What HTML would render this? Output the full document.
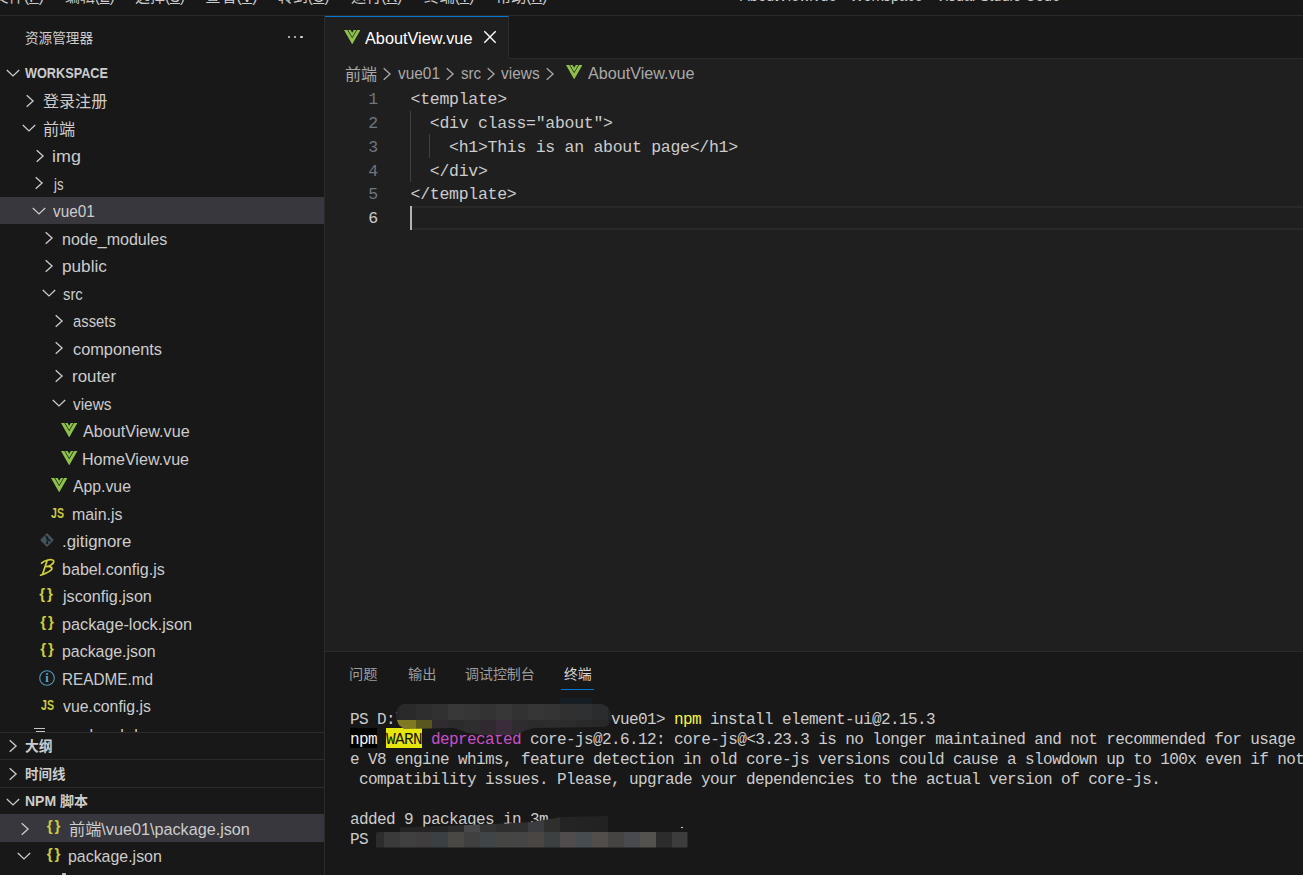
<!DOCTYPE html>
<html lang="zh-CN">
<head>
<meta charset="utf-8">
<title>AboutView.vue - Workspace - Visual Studio Code</title>
<style>
*{box-sizing:border-box;margin:0;padding:0}
html,body{width:1303px;height:875px;overflow:hidden;background:#1f1f1f}
body{position:relative;font-family:"Liberation Sans","Noto Sans CJK SC",sans-serif;font-size:16.25px;color:#cccccc;-webkit-font-smoothing:antialiased}
.abs{position:absolute;white-space:nowrap}
/* title bar */
#titlebar{left:0;top:0;width:1303px;height:16px;background:#181818;border-bottom:1px solid #2b2b2b;overflow:hidden}
/* sidebar */
#sidebar{left:0;top:16px;width:325px;height:859px;background:#181818;border-right:1px solid #2b2b2b;overflow:hidden}
/* editor */
#tabs{left:325px;top:16px;width:978px;height:43px;background:#181818;border-bottom:1px solid #2b2b2b}
#tab{left:325px;top:16px;width:184px;height:43px;background:#1f1f1f;border-top:1px solid #0078d4;border-right:1px solid #2b2b2b}
.ln{position:absolute;left:325px;width:53px;text-align:right;height:23.75px;line-height:23.75px;font-family:"Liberation Mono",monospace;font-size:16.5px;letter-spacing:-0.275px;color:#6e7681}
.cl{position:absolute;left:410.5px;height:23.75px;line-height:23.75px;font-family:"Liberation Mono",monospace;font-size:16.5px;letter-spacing:-0.275px;color:#cccccc;white-space:pre}
.guide{position:absolute;width:1px;background:#404040}
/* panel */
#panel{left:325px;top:651px;width:978px;height:224px;background:#181818;border-top:1px solid #2b2b2b}
.tl{position:absolute;left:350px;height:20px;line-height:20px;font-family:"Liberation Mono",monospace;font-size:16px;letter-spacing:-0.6px;color:#cccccc;white-space:pre}
.mz{position:absolute}
</style>
</head>
<body>

<!-- ===== TITLE BAR (cropped) ===== -->
<div id="titlebar" class="abs"></div>
<div class="abs" style="left:0;top:0;width:1303px;height:15px;overflow:hidden">
<span class="abs" style="left:-7.50px;top:-17.05px;height:27.5px;line-height:27.5px;font-size:16.25px;font-weight:normal;color:#cccccc;font-family:'Liberation Sans','Noto Sans CJK SC',sans-serif;transform:scaleX(0.9558);transform-origin:0 50%;">文件(<u>F</u>)</span>
<span class="abs" style="left:64.50px;top:-17.05px;height:27.5px;line-height:27.5px;font-size:16.25px;font-weight:normal;color:#cccccc;font-family:'Liberation Sans','Noto Sans CJK SC',sans-serif;transform:scaleX(0.9154);transform-origin:0 50%;">编辑(<u>E</u>)</span>
<span class="abs" style="left:135.00px;top:-17.05px;height:27.5px;line-height:27.5px;font-size:16.25px;font-weight:normal;color:#cccccc;font-family:'Liberation Sans','Noto Sans CJK SC',sans-serif;transform:scaleX(0.9209);transform-origin:0 50%;">选择(<u>S</u>)</span>
<span class="abs" style="left:205.00px;top:-17.05px;height:27.5px;line-height:27.5px;font-size:16.25px;font-weight:normal;color:#cccccc;font-family:'Liberation Sans','Noto Sans CJK SC',sans-serif;transform:scaleX(0.9674);transform-origin:0 50%;">查看(<u>V</u>)</span>
<span class="abs" style="left:277.50px;top:-17.05px;height:27.5px;line-height:27.5px;font-size:16.25px;font-weight:normal;color:#cccccc;font-family:'Liberation Sans','Noto Sans CJK SC',sans-serif;transform:scaleX(0.9181);transform-origin:0 50%;">转到(<u>G</u>)</span>
<span class="abs" style="left:351.00px;top:-17.05px;height:27.5px;line-height:27.5px;font-size:16.25px;font-weight:normal;color:#cccccc;font-family:'Liberation Sans','Noto Sans CJK SC',sans-serif;transform:scaleX(0.9333);transform-origin:0 50%;">运行(<u>R</u>)</span>
<span class="abs" style="left:423.50px;top:-17.05px;height:27.5px;line-height:27.5px;font-size:16.25px;font-weight:normal;color:#cccccc;font-family:'Liberation Sans','Noto Sans CJK SC',sans-serif;transform:scaleX(0.9463);transform-origin:0 50%;">终端(<u>T</u>)</span>
<span class="abs" style="left:496.00px;top:-17.05px;height:27.5px;line-height:27.5px;font-size:16.25px;font-weight:normal;color:#cccccc;font-family:'Liberation Sans','Noto Sans CJK SC',sans-serif;transform:scaleX(0.9333);transform-origin:0 50%;">帮助(<u>H</u>)</span>
<span class="abs" style="left:739.50px;top:-17.95px;height:27.5px;line-height:27.5px;font-size:16.25px;font-weight:normal;color:#cccccc;font-family:'Liberation Sans','Noto Sans CJK SC',sans-serif;transform:scaleX(0.9015);transform-origin:0 50%;">AboutView.vue - Workspace - Visual Studio Code</span>
</div>

<!-- ===== SIDEBAR ===== -->
<div id="sidebar" class="abs"></div>
<span class="abs" style="left:25.30px;top:24.75px;height:27.5px;line-height:27.5px;font-size:13.75px;font-weight:normal;color:#cccccc;font-family:'Liberation Sans','Noto Sans CJK SC',sans-serif;transform:scaleX(0.9899);transform-origin:0 50%;">资源管理器</span>
<div class="abs" style="left:287.6px;top:35.9px;width:2.5px;height:2.4px;border-radius:1.2px;background:#d8d8d8"></div>
<div class="abs" style="left:293.8px;top:35.9px;width:2.5px;height:2.4px;border-radius:1.2px;background:#d8d8d8"></div>
<div class="abs" style="left:300.0px;top:35.9px;width:2.5px;height:2.4px;border-radius:1.2px;background:#d8d8d8"></div>
<svg class="abs" style="left:4.50px;top:66.90px" width="16" height="12" viewBox="0 0 16 12"><path d="M1.8 3 L8 8.9 L14.2 3" fill="none" stroke="#cccccc" stroke-width="1.3"/></svg>
<span class="abs" style="left:25.20px;top:59.85px;height:27.5px;line-height:27.5px;font-size:13.75px;font-weight:bold;color:#cccccc;font-family:'Liberation Sans','Noto Sans CJK SC',sans-serif;transform:scaleX(0.9229);transform-origin:0 50%;">WORKSPACE</span>
<svg class="abs" style="left:23.50px;top:93.00px" width="12" height="16" viewBox="0 0 12 16"><path d="M2.7 2.2 L9.1 8 L2.7 13.8" fill="none" stroke="#cccccc" stroke-width="1.3"/></svg>
<span class="abs" style="left:43.00px;top:88.35px;height:27.5px;line-height:27.5px;font-size:16.25px;font-weight:normal;color:#cccccc;font-family:'Liberation Sans','Noto Sans CJK SC',sans-serif;transform:scaleX(0.9884);transform-origin:0 50%;">登录注册</span>
<svg class="abs" style="left:21.00px;top:122.40px" width="16" height="12" viewBox="0 0 16 12"><path d="M1.8 3 L8 8.9 L14.2 3" fill="none" stroke="#cccccc" stroke-width="1.3"/></svg>
<span class="abs" style="left:43.00px;top:115.85px;height:27.5px;line-height:27.5px;font-size:16.25px;font-weight:normal;color:#cccccc;font-family:'Liberation Sans','Noto Sans CJK SC',sans-serif;transform:scaleX(0.9923);transform-origin:0 50%;">前端</span>
<svg class="abs" style="left:33.50px;top:148.00px" width="12" height="16" viewBox="0 0 12 16"><path d="M2.7 2.2 L9.1 8 L2.7 13.8" fill="none" stroke="#cccccc" stroke-width="1.3"/></svg>
<span class="abs" style="left:51.90px;top:143.35px;height:27.5px;line-height:27.5px;font-size:16.25px;font-weight:normal;color:#cccccc;font-family:'Liberation Sans','Noto Sans CJK SC',sans-serif;transform:scaleX(1.1016);transform-origin:0 50%;">img</span>
<svg class="abs" style="left:33.30px;top:175.00px" width="12" height="16" viewBox="0 0 12 16"><path d="M2.7 2.2 L9.1 8 L2.7 13.8" fill="none" stroke="#cccccc" stroke-width="1.3"/></svg>
<span class="abs" style="left:53.61px;top:170.85px;height:27.5px;line-height:27.5px;font-size:16.25px;font-weight:normal;color:#cccccc;font-family:'Liberation Sans','Noto Sans CJK SC',sans-serif;transform:scaleX(0.8089);transform-origin:0 50%;">js</span>
<div class="abs" style="left:0;top:196.75px;width:324px;height:27.5px;background:#37373d"></div>
<svg class="abs" style="left:30.80px;top:205.40px" width="16" height="12" viewBox="0 0 16 12"><path d="M1.8 3 L8 8.9 L14.2 3" fill="none" stroke="#cccccc" stroke-width="1.3"/></svg>
<span class="abs" style="left:52.80px;top:198.35px;height:27.5px;line-height:27.5px;font-size:16.25px;font-weight:normal;color:#cccccc;font-family:'Liberation Sans','Noto Sans CJK SC',sans-serif;transform:scaleX(0.9426);transform-origin:0 50%;">vue01</span>
<svg class="abs" style="left:43.30px;top:230.00px" width="12" height="16" viewBox="0 0 12 16"><path d="M2.7 2.2 L9.1 8 L2.7 13.8" fill="none" stroke="#cccccc" stroke-width="1.3"/></svg>
<span class="abs" style="left:61.81px;top:225.85px;height:27.5px;line-height:27.5px;font-size:16.25px;font-weight:normal;color:#cccccc;font-family:'Liberation Sans','Noto Sans CJK SC',sans-serif;transform:scaleX(0.9878);transform-origin:0 50%;">node_modules</span>
<svg class="abs" style="left:43.30px;top:258.00px" width="12" height="16" viewBox="0 0 12 16"><path d="M2.7 2.2 L9.1 8 L2.7 13.8" fill="none" stroke="#cccccc" stroke-width="1.3"/></svg>
<span class="abs" style="left:61.74px;top:253.35px;height:27.5px;line-height:27.5px;font-size:16.25px;font-weight:normal;color:#cccccc;font-family:'Liberation Sans','Noto Sans CJK SC',sans-serif;transform:scaleX(1.0573);transform-origin:0 50%;">public</span>
<svg class="abs" style="left:40.80px;top:287.40px" width="16" height="12" viewBox="0 0 16 12"><path d="M1.8 3 L8 8.9 L14.2 3" fill="none" stroke="#cccccc" stroke-width="1.3"/></svg>
<span class="abs" style="left:62.80px;top:280.85px;height:27.5px;line-height:27.5px;font-size:16.25px;font-weight:normal;color:#cccccc;font-family:'Liberation Sans','Noto Sans CJK SC',sans-serif;transform:scaleX(0.9101);transform-origin:0 50%;">src</span>
<svg class="abs" style="left:53.10px;top:313.00px" width="12" height="16" viewBox="0 0 12 16"><path d="M2.7 2.2 L9.1 8 L2.7 13.8" fill="none" stroke="#cccccc" stroke-width="1.3"/></svg>
<span class="abs" style="left:72.60px;top:308.35px;height:27.5px;line-height:27.5px;font-size:16.25px;font-weight:normal;color:#cccccc;font-family:'Liberation Sans','Noto Sans CJK SC',sans-serif;transform:scaleX(0.9116);transform-origin:0 50%;">assets</span>
<svg class="abs" style="left:53.10px;top:340.00px" width="12" height="16" viewBox="0 0 12 16"><path d="M2.7 2.2 L9.1 8 L2.7 13.8" fill="none" stroke="#cccccc" stroke-width="1.3"/></svg>
<span class="abs" style="left:72.60px;top:335.85px;height:27.5px;line-height:27.5px;font-size:16.25px;font-weight:normal;color:#cccccc;font-family:'Liberation Sans','Noto Sans CJK SC',sans-serif;transform:scaleX(1.0056);transform-origin:0 50%;">components</span>
<svg class="abs" style="left:53.10px;top:368.00px" width="12" height="16" viewBox="0 0 12 16"><path d="M2.7 2.2 L9.1 8 L2.7 13.8" fill="none" stroke="#cccccc" stroke-width="1.3"/></svg>
<span class="abs" style="left:71.56px;top:363.35px;height:27.5px;line-height:27.5px;font-size:16.25px;font-weight:normal;color:#cccccc;font-family:'Liberation Sans','Noto Sans CJK SC',sans-serif;transform:scaleX(1.0395);transform-origin:0 50%;">router</span>
<svg class="abs" style="left:50.60px;top:397.40px" width="16" height="12" viewBox="0 0 16 12"><path d="M1.8 3 L8 8.9 L14.2 3" fill="none" stroke="#cccccc" stroke-width="1.3"/></svg>
<span class="abs" style="left:72.60px;top:390.85px;height:27.5px;line-height:27.5px;font-size:16.25px;font-weight:normal;color:#cccccc;font-family:'Liberation Sans','Noto Sans CJK SC',sans-serif;transform:scaleX(0.9480);transform-origin:0 50%;">views</span>
<svg class="abs" style="left:61.20px;top:422.80px" width="16.4" height="14.4" viewBox="0 0 16.4 14.4"><path d="M0 0 H3.3 L8.2 8.3 L13.1 0 H16.4 L8.2 14.4 Z" fill="#8dc149"/><path d="M4.1 0 H6.6 L8.2 2.7 L9.8 0 H12.3 L8.2 7 Z" fill="#8dc149"/></svg>
<span class="abs" style="left:83.00px;top:418.35px;height:27.5px;line-height:27.5px;font-size:16.25px;font-weight:normal;color:#cccccc;font-family:'Liberation Sans','Noto Sans CJK SC',sans-serif;transform:scaleX(0.9946);transform-origin:0 50%;">AboutView.vue</span>
<svg class="abs" style="left:61.20px;top:450.80px" width="16.4" height="14.4" viewBox="0 0 16.4 14.4"><path d="M0 0 H3.3 L8.2 8.3 L13.1 0 H16.4 L8.2 14.4 Z" fill="#8dc149"/><path d="M4.1 0 H6.6 L8.2 2.7 L9.8 0 H12.3 L8.2 7 Z" fill="#8dc149"/></svg>
<span class="abs" style="left:82.01px;top:445.85px;height:27.5px;line-height:27.5px;font-size:16.25px;font-weight:normal;color:#cccccc;font-family:'Liberation Sans','Noto Sans CJK SC',sans-serif;transform:scaleX(0.9901);transform-origin:0 50%;">HomeView.vue</span>
<svg class="abs" style="left:50.90px;top:477.80px" width="16.4" height="14.4" viewBox="0 0 16.4 14.4"><path d="M0 0 H3.3 L8.2 8.3 L13.1 0 H16.4 L8.2 14.4 Z" fill="#8dc149"/><path d="M4.1 0 H6.6 L8.2 2.7 L9.8 0 H12.3 L8.2 7 Z" fill="#8dc149"/></svg>
<span class="abs" style="left:72.70px;top:473.35px;height:27.5px;line-height:27.5px;font-size:16.25px;font-weight:normal;color:#cccccc;font-family:'Liberation Sans','Noto Sans CJK SC',sans-serif;transform:scaleX(0.9716);transform-origin:0 50%;">App.vue</span>
<span class="abs" style="left:50.80px;top:503.10px;height:20px;line-height:20px;font-size:14px;font-weight:bold;color:#cbcb41;transform:scaleX(0.755);transform-origin:0 50%">JS</span>
<span class="abs" style="left:71.72px;top:500.85px;height:27.5px;line-height:27.5px;font-size:16.25px;font-weight:normal;color:#cccccc;font-family:'Liberation Sans','Noto Sans CJK SC',sans-serif;transform:scaleX(0.9792);transform-origin:0 50%;">main.js</span>
<svg class="abs" style="left:38.70px;top:532.00px" width="16" height="16" viewBox="0 0 16 16"><path d="M8 1.1 L14.9 8 L8 14.9 L1.1 8 Z" fill="#41535b"/><path d="M6.3 3.6 L8.2 5.6 V11.4 M8.2 6.2 L10.4 8.4" fill="none" stroke="#181818" stroke-width="1.1"/><circle cx="8.2" cy="5.6" r="1.1" fill="#181818"/><circle cx="8.2" cy="11.2" r="1.1" fill="#181818"/><circle cx="10.6" cy="8.5" r="1.1" fill="#181818"/></svg>
<span class="abs" style="left:61.76px;top:528.35px;height:27.5px;line-height:27.5px;font-size:16.25px;font-weight:normal;color:#cccccc;font-family:'Liberation Sans','Noto Sans CJK SC',sans-serif;transform:scaleX(1.0363);transform-origin:0 50%;">.gitignore</span>
<svg class="abs" style="left:39.20px;top:557.70px" width="17" height="19" viewBox="0 0 17 19"><path d="M2.6 5.2 C5.5 2.4 10.5 1.2 13.6 2.0 C15.6 2.6 14.8 5.2 12.6 6.6 C11 7.7 8.8 8.4 7.6 8.6 C10.2 8.2 13.4 8.8 12.8 11 C12.2 13.2 6.6 15.4 1.6 17.2 M7.9 3.2 L3.6 16.2" fill="none" stroke="#d0cf3c" stroke-width="1.75" stroke-linecap="round" stroke-linejoin="round"/></svg>
<span class="abs" style="left:61.81px;top:555.85px;height:27.5px;line-height:27.5px;font-size:16.25px;font-weight:normal;color:#cccccc;font-family:'Liberation Sans','Noto Sans CJK SC',sans-serif;transform:scaleX(0.9897);transform-origin:0 50%;">babel.config.js</span>
<span class="abs" style="left:39.30px;top:584.40px;height:20px;line-height:20px;font-size:15.2px;font-weight:bold;color:#cbcb41;letter-spacing:1.9px">{}</span>
<span class="abs" style="left:62.89px;top:583.35px;height:27.5px;line-height:27.5px;font-size:16.25px;font-weight:normal;color:#cccccc;font-family:'Liberation Sans','Noto Sans CJK SC',sans-serif;transform:scaleX(0.9935);transform-origin:0 50%;">jsconfig.json</span>
<span class="abs" style="left:40.20px;top:612.40px;height:20px;line-height:20px;font-size:15.2px;font-weight:bold;color:#cbcb41;letter-spacing:1.9px">{}</span>
<span class="abs" style="left:61.80px;top:610.85px;height:27.5px;line-height:27.5px;font-size:16.25px;font-weight:normal;color:#cccccc;font-family:'Liberation Sans','Noto Sans CJK SC',sans-serif;transform:scaleX(0.9997);transform-origin:0 50%;">package-lock.json</span>
<span class="abs" style="left:40.20px;top:639.40px;height:20px;line-height:20px;font-size:15.2px;font-weight:bold;color:#cbcb41;letter-spacing:1.9px">{}</span>
<span class="abs" style="left:61.82px;top:638.35px;height:27.5px;line-height:27.5px;font-size:16.25px;font-weight:normal;color:#cccccc;font-family:'Liberation Sans','Noto Sans CJK SC',sans-serif;transform:scaleX(0.9784);transform-origin:0 50%;">package.json</span>
<svg class="abs" style="left:37.90px;top:669.00px" width="18" height="18" viewBox="0 0 18 18"><circle cx="9" cy="9" r="7.3" fill="none" stroke="#519aba" stroke-width="1.1"/><text x="9" y="13" text-anchor="middle" font-family="Liberation Serif,serif" font-weight="bold" font-size="12.5" fill="#5fa8c8">i</text></svg>
<span class="abs" style="left:61.86px;top:665.85px;height:27.5px;line-height:27.5px;font-size:16.25px;font-weight:normal;color:#cccccc;font-family:'Liberation Sans','Noto Sans CJK SC',sans-serif;transform:scaleX(0.9411);transform-origin:0 50%;">README.md</span>
<span class="abs" style="left:40.90px;top:695.10px;height:20px;line-height:20px;font-size:14px;font-weight:bold;color:#cbcb41;transform:scaleX(0.755);transform-origin:0 50%">JS</span>
<span class="abs" style="left:62.80px;top:693.35px;height:27.5px;line-height:27.5px;font-size:16.25px;font-weight:normal;color:#cccccc;font-family:'Liberation Sans','Noto Sans CJK SC',sans-serif;transform:scaleX(0.9734);transform-origin:0 50%;">vue.config.js</span>
<div class="abs" style="left:0;top:720px;width:324px;height:12px;overflow:hidden"><div class="abs" style="left:34px;top:7.8px;width:10.6px;height:1.6px;background:#c5c5c5"></div><div class="abs" style="left:36px;top:10.9px;width:8.6px;height:1.6px;background:#c5c5c5"></div><span class="abs" style="left:89.6px;top:1.8px;height:27.5px;line-height:27.5px;font-size:16.25px;color:#cccccc">l</span><span class="abs" style="left:120.3px;top:1.8px;height:27.5px;line-height:27.5px;font-size:16.25px;color:#cccccc">l</span><span class="abs" style="left:134.2px;top:1.8px;height:27.5px;line-height:27.5px;font-size:16.25px;color:#cccccc">l</span></div>
<div class="abs" style="left:0;top:732px;width:324px;height:27px;background:#181818;border-top:1px solid #2b2b2b"></div><svg class="abs" style="left:7.10px;top:737.90px" width="12" height="16" viewBox="0 0 12 16"><path d="M2.7 2.2 L9.1 8 L2.7 13.8" fill="none" stroke="#cccccc" stroke-width="1.3"/></svg><span class="abs" style="left:25.20px;top:732.85px;height:27.5px;line-height:27.5px;font-size:13.75px;font-weight:bold;color:#cccccc;font-family:'Liberation Sans','Noto Sans CJK SC',sans-serif;transform:scaleX(1.0019);transform-origin:0 50%;">大纲</span>
<div class="abs" style="left:0;top:759px;width:324px;height:28px;background:#181818;border-top:1px solid #2b2b2b"></div><svg class="abs" style="left:7.10px;top:765.90px" width="12" height="16" viewBox="0 0 12 16"><path d="M2.7 2.2 L9.1 8 L2.7 13.8" fill="none" stroke="#cccccc" stroke-width="1.3"/></svg><span class="abs" style="left:25.20px;top:760.85px;height:27.5px;line-height:27.5px;font-size:13.75px;font-weight:bold;color:#cccccc;font-family:'Liberation Sans','Noto Sans CJK SC',sans-serif;transform:scaleX(0.9783);transform-origin:0 50%;">时间线</span>
<div class="abs" style="left:0;top:787px;width:324px;height:28px;background:#181818;border-top:1px solid #2b2b2b"></div><svg class="abs" style="left:4.60px;top:795.50px" width="16" height="12" viewBox="0 0 16 12"><path d="M1.8 3 L8 8.9 L14.2 3" fill="none" stroke="#cccccc" stroke-width="1.3"/></svg><span class="abs" style="left:25.20px;top:787.95px;height:27.5px;line-height:27.5px;font-size:13.75px;font-weight:bold;color:#cccccc;font-family:'Liberation Sans','Noto Sans CJK SC',sans-serif;transform:scaleX(1.0189);transform-origin:0 50%;">NPM 脚本</span>
<div class="abs" style="left:0;top:814px;width:324px;height:28px;background:#37373d"></div>
<svg class="abs" style="left:18.80px;top:820.55px" width="12" height="16" viewBox="0 0 12 16"><path d="M2.7 2.2 L9.1 8 L2.7 13.8" fill="none" stroke="#cccccc" stroke-width="1.3"/></svg>
<span class="abs" style="left:46.80px;top:816.35px;height:20px;line-height:20px;font-size:15.2px;font-weight:bold;color:#cbcb41;letter-spacing:1.9px">{}</span>
<span class="abs" style="left:69.20px;top:815.50px;height:27.5px;line-height:27.5px;font-size:16.25px;font-weight:normal;color:#cccccc;font-family:'Liberation Sans','Noto Sans CJK SC',sans-serif;transform:scaleX(0.9960);transform-origin:0 50%;">前端\vue01\package.json</span>
<svg class="abs" style="left:16.20px;top:850.05px" width="16" height="12" viewBox="0 0 16 12"><path d="M1.8 3 L8 8.9 L14.2 3" fill="none" stroke="#cccccc" stroke-width="1.3"/></svg>
<span class="abs" style="left:46.80px;top:843.85px;height:20px;line-height:20px;font-size:15.2px;font-weight:bold;color:#cbcb41;letter-spacing:1.9px">{}</span>
<span class="abs" style="left:68.22px;top:843.00px;height:27.5px;line-height:27.5px;font-size:16.25px;font-weight:normal;color:#cccccc;font-family:'Liberation Sans','Noto Sans CJK SC',sans-serif;transform:scaleX(0.9795);transform-origin:0 50%;">package.json</span>
<div class="abs" style="left:62px;top:873.3px;width:4px;height:2px;border-radius:1px 1px 0 0;background:#bdbdbd"></div>

<!-- ===== EDITOR ===== -->
<div id="tabs" class="abs"></div>
<div id="tab" class="abs"></div>
<svg class="abs" style="left:344.00px;top:30.10px" width="16.4" height="14.4" viewBox="0 0 16.4 14.4"><path d="M0 0 H3.3 L8.2 8.3 L13.1 0 H16.4 L8.2 14.4 Z" fill="#8dc149"/><path d="M4.1 0 H6.6 L8.2 2.7 L9.8 0 H12.3 L8.2 7 Z" fill="#8dc149"/></svg>
<span class="abs" style="left:365.20px;top:24.55px;height:27.5px;line-height:27.5px;font-size:16.25px;font-weight:normal;color:#ffffff;font-family:'Liberation Sans','Noto Sans CJK SC',sans-serif;transform:scaleX(1.0021);transform-origin:0 50%;">AboutView.vue</span>
<svg class="abs" style="left:482px;top:29.3px" width="16" height="16" viewBox="0 0 16 16"><path d="M2.3 2.3 L13.7 13.7 M13.7 2.3 L2.3 13.7" stroke="#ffffff" stroke-width="1.4" fill="none"/></svg>
<span class="abs" style="left:345.20px;top:60.65px;height:27.5px;line-height:27.5px;font-size:16.25px;font-weight:normal;color:#a9a9a9;font-family:'Liberation Sans','Noto Sans CJK SC',sans-serif;transform:scaleX(0.9860);transform-origin:0 50%;">前端</span>
<svg class="abs" style="left:381.30px;top:65.80px" width="12" height="16" viewBox="0 0 12 16"><path d="M2.7 2.2 L9.1 8 L2.7 13.8" fill="none" stroke="#a9a9a9" stroke-width="1.3"/></svg>
<span class="abs" style="left:398.00px;top:60.25px;height:27.5px;line-height:27.5px;font-size:16.25px;font-weight:normal;color:#a9a9a9;font-family:'Liberation Sans','Noto Sans CJK SC',sans-serif;transform:scaleX(0.9494);transform-origin:0 50%;">vue01</span>
<svg class="abs" style="left:444.30px;top:65.80px" width="12" height="16" viewBox="0 0 12 16"><path d="M2.7 2.2 L9.1 8 L2.7 13.8" fill="none" stroke="#a9a9a9" stroke-width="1.3"/></svg>
<span class="abs" style="left:461.00px;top:60.25px;height:27.5px;line-height:27.5px;font-size:16.25px;font-weight:normal;color:#a9a9a9;font-family:'Liberation Sans','Noto Sans CJK SC',sans-serif;transform:scaleX(0.9287);transform-origin:0 50%;">src</span>
<svg class="abs" style="left:484.50px;top:65.80px" width="12" height="16" viewBox="0 0 12 16"><path d="M2.7 2.2 L9.1 8 L2.7 13.8" fill="none" stroke="#a9a9a9" stroke-width="1.3"/></svg>
<span class="abs" style="left:501.00px;top:60.25px;height:27.5px;line-height:27.5px;font-size:16.25px;font-weight:normal;color:#a9a9a9;font-family:'Liberation Sans','Noto Sans CJK SC',sans-serif;transform:scaleX(0.9504);transform-origin:0 50%;">views</span>
<svg class="abs" style="left:543.50px;top:65.80px" width="12" height="16" viewBox="0 0 12 16"><path d="M2.7 2.2 L9.1 8 L2.7 13.8" fill="none" stroke="#a9a9a9" stroke-width="1.3"/></svg>
<svg class="abs" style="left:566.00px;top:64.60px" width="16.4" height="14.4" viewBox="0 0 16.4 14.4"><path d="M0 0 H3.3 L8.2 8.3 L13.1 0 H16.4 L8.2 14.4 Z" fill="#8dc149"/><path d="M4.1 0 H6.6 L8.2 2.7 L9.8 0 H12.3 L8.2 7 Z" fill="#8dc149"/></svg>
<span class="abs" style="left:587.50px;top:60.25px;height:27.5px;line-height:27.5px;font-size:16.25px;font-weight:normal;color:#a9a9a9;font-family:'Liberation Sans','Noto Sans CJK SC',sans-serif;transform:scaleX(0.9937);transform-origin:0 50%;">AboutView.vue</span>
<div class="ln" style="top:88.45px;color:#6e7681">1</div>
<div class="cl" style="top:88.45px">&lt;template&gt;</div>
<div class="ln" style="top:112.20px;color:#6e7681">2</div>
<div class="cl" style="top:112.20px">  &lt;div class="about"&gt;</div>
<div class="ln" style="top:135.95px;color:#6e7681">3</div>
<div class="cl" style="top:135.95px">    &lt;h1&gt;This is an about page&lt;/h1&gt;</div>
<div class="ln" style="top:159.70px;color:#6e7681">4</div>
<div class="cl" style="top:159.70px">  &lt;/div&gt;</div>
<div class="ln" style="top:183.45px;color:#6e7681">5</div>
<div class="cl" style="top:183.45px">&lt;/template&gt;</div>
<div class="ln" style="top:207.20px;color:#cccccc">6</div>
<div class="guide" style="left:410px;top:110.50px;height:71.25px"></div>
<div class="guide" style="left:429px;top:134.25px;height:23.75px"></div>
<div class="abs" style="left:411px;top:206px;width:892px;height:24px;border-top:2px solid #292929;border-bottom:2px solid #292929"></div>
<div class="abs" style="left:409.7px;top:206px;width:2.5px;height:24px;background:#b4b4b2"></div>

<!-- ===== PANEL ===== -->
<div id="panel" class="abs"></div>
<span class="abs" style="left:349.26px;top:660.85px;height:27.5px;line-height:27.5px;font-size:13.75px;font-weight:normal;color:#9d9d9d;font-family:'Liberation Sans','Noto Sans CJK SC',sans-serif;transform:scaleX(1.0355);transform-origin:0 50%;">问题</span>
<span class="abs" style="left:407.50px;top:660.85px;height:27.5px;line-height:27.5px;font-size:13.75px;font-weight:normal;color:#9d9d9d;font-family:'Liberation Sans','Noto Sans CJK SC',sans-serif;transform:scaleX(1.0355);transform-origin:0 50%;">输出</span>
<span class="abs" style="left:465.00px;top:660.85px;height:27.5px;line-height:27.5px;font-size:13.75px;font-weight:normal;color:#9d9d9d;font-family:'Liberation Sans','Noto Sans CJK SC',sans-serif;transform:scaleX(1.0147);transform-origin:0 50%;">调试控制台</span>
<span class="abs" style="left:564.00px;top:660.85px;height:27.5px;line-height:27.5px;font-size:13.75px;font-weight:normal;color:#d6d6d6;font-family:'Liberation Sans','Noto Sans CJK SC',sans-serif;transform:scaleX(1.0090);transform-origin:0 50%;">终端</span>
<div class="abs" style="left:561px;top:688.5px;width:33px;height:1px;background:#0078d4"></div>
<div class="abs" style="left:350px;top:728px;width:27px;height:20px;background:#000000"></div>
<div class="abs" style="left:386px;top:728px;width:36px;height:20px;background:#e5e510"></div>
<div class="tl" style="top:710.20px">PS D:\                       vue01&gt; <span style="color:#f5f543">npm</span> install element-ui@2.15.3</div>
<div class="tl" style="top:730.20px"><span style="color:#f2f2f2">npm</span> <span style="color:#15150a">WARN</span> <span style="color:#c94fc9">deprecated</span> core-js@2.6.12: core-js@&lt;3.23.3 is no longer maintained and not recommended for usage du</div>
<div class="tl" style="top:750.20px">e V8 engine whims, feature detection in old core-js versions could cause a slowdown up to 100x even if noth</div>
<div class="tl" style="top:770.20px"> compatibility issues. Please, upgrade your dependencies to the actual version of core-js.</div>
<div class="tl" style="top:810.20px">added 9 packages in 3m</div>
<div class="tl" style="top:830.20px">PS D:\</div>
<div class="abs" style="left:560px;top:698px;width:32px;height:6px;background:#161d25"></div>
<div class="abs" style="left:384px;top:704px;width:240px;height:32px;clip-path:polygon(12.3px 8px,14px 3px,19px 0px,218px 0px,224px 3px,227px 9px,227px 16px,225px 21px,220px 23px,150px 24px,140px 27px,132px 31px,100px 31px,84px 29px,70px 24px,20px 25px,15px 21px,12.3px 15px);overflow:hidden"><div class="mz" style="left:0px;top:0px;width:16px;height:16px;background:#262626"></div><div class="mz" style="left:16px;top:0px;width:16px;height:16px;background:#2a2a2a"></div><div class="mz" style="left:32px;top:0px;width:16px;height:16px;background:#2e2e2e"></div><div class="mz" style="left:48px;top:0px;width:16px;height:16px;background:#313131"></div><div class="mz" style="left:64px;top:0px;width:16px;height:16px;background:#383838"></div><div class="mz" style="left:80px;top:0px;width:16px;height:16px;background:#363636"></div><div class="mz" style="left:96px;top:0px;width:16px;height:16px;background:#333333"></div><div class="mz" style="left:112px;top:0px;width:16px;height:16px;background:#373737"></div><div class="mz" style="left:128px;top:0px;width:16px;height:16px;background:#323232"></div><div class="mz" style="left:144px;top:0px;width:16px;height:16px;background:#363636"></div><div class="mz" style="left:160px;top:0px;width:16px;height:16px;background:#343434"></div><div class="mz" style="left:176px;top:0px;width:16px;height:16px;background:#303030"></div><div class="mz" style="left:192px;top:0px;width:16px;height:16px;background:#2e3032"></div><div class="mz" style="left:208px;top:0px;width:16px;height:16px;background:#2a2c2e"></div><div class="mz" style="left:224px;top:0px;width:16px;height:16px;background:#242424"></div><div class="mz" style="left:0px;top:16px;width:16px;height:16px;background:#7f7a22"></div><div class="mz" style="left:16px;top:16px;width:16px;height:16px;background:#7f7a22"></div><div class="mz" style="left:32px;top:16px;width:16px;height:16px;background:#5a5620"></div><div class="mz" style="left:48px;top:16px;width:16px;height:16px;background:#302b31"></div><div class="mz" style="left:64px;top:16px;width:16px;height:16px;background:#2c2b2c"></div><div class="mz" style="left:80px;top:16px;width:16px;height:16px;background:#2e2e2e"></div><div class="mz" style="left:96px;top:16px;width:16px;height:16px;background:#30292f"></div><div class="mz" style="left:112px;top:16px;width:16px;height:16px;background:#3a2d39"></div><div class="mz" style="left:128px;top:16px;width:16px;height:16px;background:#2e2c2e"></div><div class="mz" style="left:144px;top:16px;width:16px;height:16px;background:#2b2b2b"></div><div class="mz" style="left:160px;top:16px;width:16px;height:16px;background:#2d2d2d"></div><div class="mz" style="left:176px;top:16px;width:16px;height:16px;background:#2c2c2c"></div><div class="mz" style="left:192px;top:16px;width:16px;height:16px;background:#2a2a2a"></div><div class="mz" style="left:208px;top:16px;width:16px;height:16px;background:#282828"></div><div class="mz" style="left:224px;top:16px;width:16px;height:16px;background:#222222"></div></div>
<div class="abs" style="left:368px;top:816px;width:330px;height:32px;clip-path:polygon(8px 17.1px,19px 11.6px,54.9px 10.8px,88px 9.4px,115.6px 8.3px,137.7px 7.5px,162.6px 6.1px,176.4px 3.9px,193px 1.1px,240px 0px,240.5px 11.6px,319.5px 11.6px,319.5px 31.5px,8px 31.5px);overflow:hidden"><div class="mz" style="left:80px;top:0px;width:16px;height:16px;background:#2b2b2b"></div><div class="mz" style="left:96px;top:0px;width:16px;height:16px;background:#48484a"></div><div class="mz" style="left:112px;top:0px;width:16px;height:16px;background:#333333"></div><div class="mz" style="left:128px;top:0px;width:16px;height:16px;background:#2e2e2e"></div><div class="mz" style="left:144px;top:0px;width:16px;height:16px;background:#2f2f2f"></div><div class="mz" style="left:160px;top:0px;width:16px;height:16px;background:#3a3c40"></div><div class="mz" style="left:176px;top:0px;width:16px;height:16px;background:#2f2f2d"></div><div class="mz" style="left:192px;top:0px;width:16px;height:16px;background:#242424"></div><div class="mz" style="left:208px;top:0px;width:16px;height:16px;background:#232323"></div><div class="mz" style="left:224px;top:0px;width:16px;height:16px;background:#222222"></div><div class="mz" style="left:32px;top:0px;width:16px;height:16px;background:#242424"></div><div class="mz" style="left:48px;top:0px;width:16px;height:16px;background:#242424"></div><div class="mz" style="left:64px;top:0px;width:16px;height:16px;background:#242424"></div><div class="mz" style="left:0px;top:16px;width:16px;height:16px;background:#2c2c2c"></div><div class="mz" style="left:16px;top:16px;width:16px;height:16px;background:#3a3a3a"></div><div class="mz" style="left:32px;top:16px;width:16px;height:16px;background:#404040"></div><div class="mz" style="left:48px;top:16px;width:16px;height:16px;background:#3f3d3d"></div><div class="mz" style="left:64px;top:16px;width:16px;height:16px;background:#3a4145"></div><div class="mz" style="left:80px;top:16px;width:16px;height:16px;background:#4a4845"></div><div class="mz" style="left:96px;top:16px;width:16px;height:16px;background:#404040"></div><div class="mz" style="left:112px;top:16px;width:16px;height:16px;background:#3f4648"></div><div class="mz" style="left:128px;top:16px;width:16px;height:16px;background:#454544"></div><div class="mz" style="left:144px;top:16px;width:16px;height:16px;background:#454545"></div><div class="mz" style="left:160px;top:16px;width:16px;height:16px;background:#4a4644"></div><div class="mz" style="left:176px;top:16px;width:16px;height:16px;background:#3d4040"></div><div class="mz" style="left:192px;top:16px;width:16px;height:16px;background:#504c4e"></div><div class="mz" style="left:208px;top:16px;width:16px;height:16px;background:#454c52"></div><div class="mz" style="left:224px;top:16px;width:16px;height:16px;background:#524e4c"></div><div class="mz" style="left:240px;top:16px;width:16px;height:16px;background:#464442"></div><div class="mz" style="left:256px;top:16px;width:16px;height:16px;background:#484a50"></div><div class="mz" style="left:272px;top:16px;width:16px;height:16px;background:#54524e"></div><div class="mz" style="left:288px;top:16px;width:16px;height:16px;background:#2c2c2c"></div><div class="mz" style="left:304px;top:16px;width:16px;height:16px;background:#3c3c3c"></div></div>
<div class="abs" style="left:681px;top:826.6px;width:2.4px;height:1.4px;background:#d0d0d0"></div>

</body>
</html>
